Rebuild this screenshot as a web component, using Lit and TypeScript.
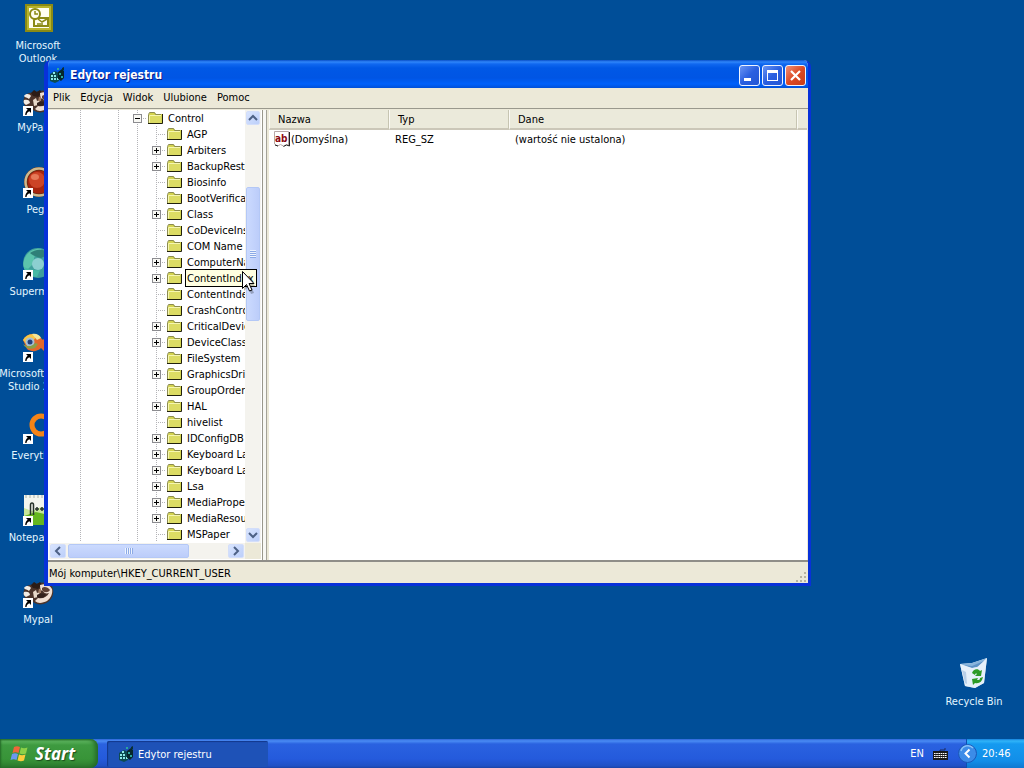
import { LitElement, html, svg, css, nothing } from "lit";
import { customElement, property } from "lit/decorators.js";
import { classMap } from "lit/directives/class-map.js";

const shortcutArrow = svg`
  <rect x="1" y="22" width="10" height="10" fill="#fff"/>
  <path d="M4 24h5v5l-1.700-1.700c-1.800 1-2.600 2-2.800 3.700h-1.300c0-2.400.9-4 2.500-5.300z" fill="#000"/>`;

const raccoon = svg`
  <path d="M3 12c3-4 7-4 9-2 4-5 12-4 17-1 3 3 3 10 0 14-4 6-13 7-18 3-4-1-6-2-8-4-2-3-2-7 0-10z" fill="#4c342a"/>
  <path d="M2 12c2-3 6-2 7 0l-2 3c-2-2-4-1-5-3zM2 16c3-1 6 0 6 3l-4 2c-2-1-3-3-2-5z" fill="#f3ece4"/>
  <path d="M9 9l3-3 3 2 3-2 2 3-4 4-5-1z" fill="#2c1c16"/>
  <path d="M11 16l3-2 1 3 3-1-2 5-4 1z" fill="#e8d8c8"/>
  <path d="M18 9c5-2 10 0 12 4 1 4-1 9-5 12-4 2-9 3-12 0l3-3c5 1 9-1 11-5-3 1-5 0-6-2-2 0-3-2-3-6z" fill="#f0dfd2"/>
  <path d="M20 12c2-2 6-1 8 2-2 3-6 3-8 0z" fill="#5e4034"/>
  <path d="M15 19c3-2 7-2 9 0-2 3-6 4-9 2z" fill="#33211b"/>
  <path d="M17 13h2v4h-3z" fill="#a07c64"/>`;

const pictures: Record<string, unknown> = {
  outlook: svg`
    <rect x="3" y="2" width="28" height="28" fill="#8b8a14"/>
    <rect x="5" y="4" width="24" height="24" fill="#b9b52c"/>
    <rect x="7" y="6" width="20" height="20" fill="#fffef0"/>
    <path d="M15 16h11v8H12v-6z" fill="#fffef0" stroke="#8b8a14" stroke-width="2"/>
    <path d="M16 17l4 3 5-3M15 22h6" fill="none" stroke="#8b8a14" stroke-width="1.500"/>
    <circle cx="13" cy="12" r="5" fill="#fffef0" stroke="#8b8a14" stroke-width="2"/>
    <path d="M13 9v3h3" fill="none" stroke="#8b8a14" stroke-width="1.500"/>`,
  raccoon,
  ball: svg`
    <circle cx="17" cy="16" r="15" fill="#5d2a14"/>
    <circle cx="17" cy="16" r="13.500" fill="none" stroke="#cdb98e" stroke-width="2.500"/>
    <circle cx="17" cy="16" r="11.500" fill="#a5240d"/>
    <circle cx="15" cy="14" r="8" fill="#cc4426"/>
    <ellipse cx="13" cy="11" rx="4" ry="3" fill="#e67a58"/>`,
  globe: svg`
    <circle cx="16" cy="15" r="15" fill="#3f9f9c"/>
    <path d="M2 12C5 3 13 0 20 1c-6 3-9 8-8 14l-8 8c-3-3-3-7-2-11z" fill="#5cc4ac"/>
    <path d="M8 5c5-4 14-5 20 1l-9 4c-5-1-9-3-11-5z" fill="#2e7f78"/>
    <circle cx="16" cy="16" r="6" fill="#8ccfd0"/>
    <path d="M2 19c5 2 10 4 16 3l-3 7C8 29 3 24 2 19z" fill="#46b9a4"/>`,
  studio: svg`
    <path d="M1 10c3-6 11-8 16-4l4 4 5-6 6 2v16l-6 3-7-7c-4 4-10 4-14 1z" fill="#e2682c"/>
    <path d="M1 10C4 4 11 3 15 6l-4 5-6 4z" fill="#f6c648"/>
    <path d="M10 4c4-1 8 1 9 4l-4 2z" fill="#f3e59a"/>
    <circle cx="8" cy="12" r="4.500" fill="#a5bfd6"/>
    <circle cx="8" cy="12" r="2.500" fill="#23407a"/>
    <path d="M1 14c2 4 7 6 12 4l3-4-3-1c-3 4-8 4-12 1z" fill="#88a04a"/>`,
  search: svg`
    <circle cx="19" cy="13" r="9" fill="none" stroke="#f58418" stroke-width="5"/>
    <path d="M25 20l6 7" stroke="#f58418" stroke-width="5"/>`,
  notepad: svg`
    <rect x="2" y="1" width="29" height="30" fill="#f3f6ee"/>
    <path d="M2 14l8 3 9-4 12 3v14H2z" fill="#c6e69a"/>
    <path d="M2 22l12-4 17 4v9H2z" fill="#65b71f"/>
    <path d="M4 1v3M8 1v3M12 1v3M16 1v3M20 1v3M24 1v3" stroke="#c4c9c0" stroke-width="1.500"/>
    <path d="M8.500 21V11q0-2 1.500-2t1.500 2v10M13 15h4M15 13v4M18 15h4M20 13v4" fill="none" stroke="#26332a" stroke-width="1.500"/>`,
  bin: svg`
    <path d="M2 6l12-1 15-5-3 25-9 5-10-2z" fill="#d7e6f4"/>
    <path d="M2 6l12-1 15-5-9 8-6 2z" fill="#88b4dc"/>
    <path d="M5 7l9 1 12-5-7 6-5 1z" fill="#5d92c6"/>
    <path d="M2 6l12 4 6-1 9-9-3 25-9 5-10-2z" fill="#e9f1fa" opacity=".85"/>
    <path d="M4 12l4 2 1 12-2-1z" fill="#b9cfe8"/>
    <path d="M14 15c1-4 6-5 8-2l2-1-1 6h-6l2-2c-1-1-2 0-2 1zM25 19c-1 5-4 7-8 6l-2 2-1-6 6-1-1 2c2 0 3 0 3-2z" fill="#2c9a26"/>`,
};

const registryGlyph = html`<svg class="reg" viewBox="0 0 16 16" aria-hidden="true">
  <path d="M1 7l5-3 4 2v8l-4 2-5-2z" fill="#0c4c50"/>
  <path d="M2 8h2v2H2zM5 8h2v2H5zM2 11h2v2H2zM5 11h2v2H5zM8 11h2v2H8zM4 5h2v2H4z" fill="#8ceae6"/>
  <path d="M9 5l4-3 2 2v7l-3 3-3-2z" fill="#06282c"/>
  <path d="M10 6h2v2h-2zM12 9h2v2h-2zM8 1h2v2H8z" fill="#2ca79c"/>
  <path d="M13 1l2-1v3h-2z" fill="#0a3034"/></svg>`;

const tahoma = css`"DejaVu Sans Condensed", "Noto Sans", sans-serif`;

@customElement("desktop-icon")
export class DesktopIcon extends LitElement {
  @property() label = "";
  @property() picture = "";
  @property({ type: Boolean }) shortcut = false;

  static styles = css`
    :host { display: block; width: 76px; height: 82px; }
    a {
      display: flex; flex-direction: column; align-items: center; gap: 5px;
      padding-top: 2px; color: #e4f6ff; text-decoration: none;
      font: 11px/13px ${tahoma}; text-align: center;
    }
    svg { width: 32px; height: 32px; flex: none; }
    span { white-space: pre; }
  `;

  render() {
    return html`<a href="#">
      <svg viewBox="0 0 32 32" aria-hidden="true">${pictures[this.picture]}${this.shortcut ? shortcutArrow : nothing}</svg>
      <span>${this.label}</span>
    </a>`;
  }
}

interface Key { name: string; open?: boolean; closed?: boolean; tip?: boolean; }

const keys: Key[] = [
  { name: "AGP" },
  { name: "Arbiters", closed: true },
  { name: "BackupRestore", closed: true },
  { name: "Biosinfo" },
  { name: "BootVerificationProgram" },
  { name: "Class", closed: true },
  { name: "CoDeviceInstallers" },
  { name: "COM Name Arbiter" },
  { name: "ComputerName", closed: true },
  { name: "ContentIndex", closed: true, tip: true },
  { name: "ContentIndexCommon" },
  { name: "CrashControl" },
  { name: "CriticalDeviceDatabase", closed: true },
  { name: "DeviceClasses", closed: true },
  { name: "FileSystem" },
  { name: "GraphicsDrivers", closed: true },
  { name: "GroupOrderList" },
  { name: "HAL", closed: true },
  { name: "hivelist" },
  { name: "IDConfigDB", closed: true },
  { name: "Keyboard Layout", closed: true },
  { name: "Keyboard Layouts", closed: true },
  { name: "Lsa", closed: true },
  { name: "MediaProperties", closed: true },
  { name: "MediaResources", closed: true },
  { name: "MSPaper" },
];

@customElement("registry-tree")
export class RegistryTree extends LitElement {
  static styles = css`
    :host { display: block; font: 11px/17px ${tahoma}; color: #000; }
    ul { list-style: none; margin: 0; padding: 0; }
    .row { display: flex; height: 16px; padding-left: 3px; overflow: hidden; position: relative; white-space: nowrap; }
    .row.hovered { overflow: visible; z-index: 2; }
    .cell { flex: none; width: 19px; display: grid; place-items: center; box-sizing: border-box; }
    .line { background: repeating-linear-gradient(#b4b4b8 0 1px, transparent 1px 2px) 9px 0 / 1px 100% no-repeat; }
    .branch {
      background:
        repeating-linear-gradient(#b4b4b8 0 1px, transparent 1px 2px) 9px 0 / 1px 100% no-repeat,
        repeating-linear-gradient(90deg, #b4b4b8 0 1px, transparent 1px 2px) 9px 8px / 10px 1px no-repeat;
    }
    button {
      width: 9px; height: 9px; padding: 0; border: 1px solid #8c8c90; background: #f8f8f4;
      display: grid; place-items: center; border-radius: 0;
    }
    button svg { width: 7px; height: 7px; display: block; }
    .folder { flex: none; width: 17px; height: 16px; }
    .label { padding-left: 4px; }
    .tip {
      position: absolute; left: 136px; top: -1px; height: 16px; padding: 0 2px 0 1px;
      background: #ffffe1; border: 1px solid #000; line-height: 17px;
    }
    .pointer { position: absolute; left: 192px; top: 0; width: 14px; height: 24px; }
  `;

  private row(key: Key) {
    const cells = key.open ? ["", "line", "", "line"] : ["", "line", "", "line", "line"];
    return html`<li class=${classMap({ row: true, hovered: !!key.tip })}>
      ${cells.map((c) => html`<span class="cell ${c}"></span>`)}
      <span class="cell branch">
        ${key.open || key.closed
          ? html`<button aria-label=${`${key.open ? "Zwiń" : "Rozwiń"} ${key.name}`}>
              <svg viewBox="0 0 7 7"><path d=${key.open ? "M1 3.5h5" : "M1 3.5h5M3.5 1v5"} stroke="#000"/></svg>
            </button>`
          : nothing}
      </span>
      <svg class="folder" viewBox="0 0 17 16" aria-hidden="true">
        <path d="M2 13.500V4l1-1.500h5L9 4h6v9.500z" fill="#d4d450"/>
        <path d="M2 6h12v7H2z" fill="#dcdc64"/>
        <path d="M1.500 13V4.500l1-2h5l1 2H14" fill="none" stroke="#8c8c50"/>
        <path d="M2.500 12.500v-7H14" fill="none" stroke="#f6f6b0"/>
        <path d="M15.500 4v9.500H1" fill="none" stroke="#20200c"/>
      </svg>
      <span class="label">${key.name}</span>
      ${key.tip
        ? html`<span class="tip" role="tooltip">${key.name}</span>
            <svg class="pointer" viewBox="0 0 14 24" aria-hidden="true">
              <path d="M3 3v18l4-4 3 7 3-1-3-7h4z" fill="#000" opacity=".25"/>
              <path d="M1.500 1.500v17l4-4 3 6.500 2.500-1-3-6.500h5z" fill="#fff" stroke="#000"/>
            </svg>`
        : nothing}
    </li>`;
  }

  render() {
    return html`<ul>${[{ name: "Control", open: true }, ...keys].map((k) => this.row(k))}</ul>`;
  }
}

@customElement("scroll-bar")
export class ScrollBar extends LitElement {
  @property({ type: Boolean, reflect: true }) horizontal = false;
  @property({ type: Number }) before = 0;
  @property({ type: Number }) size = 0;
  @property({ type: Number }) after = 0;

  static styles = css`
    :host { display: flex; flex-direction: column; background: #f4f3ee; padding: 1px; gap: 1px; box-sizing: border-box; width: 16px; }
    :host([horizontal]) { flex-direction: row; width: auto; height: 16px; }
    button {
      flex: none; width: 14px; height: 14px; padding: 0; border: 1px solid #d3defa; border-radius: 2px;
      background: linear-gradient(135deg, #d8e4fe, #bccffa); display: grid; place-items: center;
    }
    :host([horizontal]) button { width: 16px; }
    button svg { width: 10px; height: 10px; fill: none; stroke: #4d6185; stroke-width: 2; display: block; }
    .track { flex: 1; display: flex; flex-direction: inherit; min-height: 0; min-width: 0; }
    .track > div { flex-basis: 0; }
    .thumb {
      border: 1px solid #b4c8f6; border-radius: 2px; box-sizing: border-box; min-height: 0; min-width: 0;
      background: linear-gradient(90deg, #cbdafe, #bccdfa); display: grid; place-items: center;
    }
    :host([horizontal]) .thumb { background: linear-gradient(#cbdafe, #bccdfa); }
    .grip { width: 6px; height: 8px; background: repeating-linear-gradient(#eef4fe 0 1px, #8caae6 1px 2px); }
    :host([horizontal]) .grip { width: 8px; height: 6px; background: repeating-linear-gradient(90deg, #eef4fe 0 1px, #8caae6 1px 2px); }
  `;

  render() {
    const h = this.horizontal;
    return html`
      <button aria-label=${h ? "W lewo" : "W górę"}><svg viewBox="0 0 10 10"><path d=${h ? "M7 1L3 5l4 4" : "M1 7l4-4 4 4"}/></svg></button>
      <div class="track">
        <div style="flex-grow:${this.before}"></div>
        <div class="thumb" style="flex-grow:${this.size}"><span class="grip"></span></div>
        <div style="flex-grow:${this.after}"></div>
      </div>
      <button aria-label=${h ? "W prawo" : "W dół"}><svg viewBox="0 0 10 10"><path d=${h ? "M3 1l4 4-4 4" : "M1 3l4 4 4-4"}/></svg></button>`;
  }
}

@customElement("registry-window")
export class RegistryWindow extends LitElement {
  static styles = css`
    :host {
      display: flex; flex-direction: column; box-sizing: border-box; overflow: hidden;
      border: solid #0831d9; border-width: 0 3px 3px 4px; border-radius: 7px 7px 0 0;
      background: #ece9d8; font: 11px/13px ${tahoma}; color: #000;
    }
    button { font: inherit; color: inherit; border: 0; background: none; padding: 0; }
    header {
      height: 28px; flex: none; display: flex; align-items: center; gap: 5px; padding: 2px 2px 0 1px; box-sizing: border-box;
      background: linear-gradient(#0a50c8 0, #2f86fa 2px, #1068f0 4px, #0058e6 8px, #0055e4 18px, #0061fb 24px, #0050d8 28px);
    }
    .reg { width: 16px; height: 16px; }
    h1 { flex: 1; margin: 0; font: bold 12px/16px ${tahoma}; color: #fff; text-shadow: 1px 1px #0a1883; }
    .controls { display: flex; gap: 2px; }
    .controls button {
      width: 21px; height: 21px; border: 1px solid #f0f4ff; border-radius: 3px; box-sizing: border-box;
      background: linear-gradient(135deg, #6a94f4, #2a5fe0 50%, #2456d4);
    }
    .controls .close { background: linear-gradient(135deg, #f09078, #dc4a24 50%, #c83c18); }
    .controls svg { display: block; width: 19px; height: 19px; }
    nav { flex: none; height: 20px; display: flex; align-items: center; gap: 10px; padding: 0 0 1px 5px; box-sizing: border-box; }
    main { flex: 1; min-height: 0; display: grid; grid-template-columns: 215px 1fr; column-gap: 6px; padding: 1px 1px 0 0; border-top: 1px solid #9a988c; border-bottom: 2px solid #8f8e88; }
    .tree-pane {
      display: grid; grid-template-columns: minmax(0, 1fr) 16px; grid-template-rows: minmax(0, 1fr) 16px;
      background: #fff; border-right: 1px solid #9a988c; padding: 0 1px 1px 1px; box-shadow: 3px 0 #f8f8f4, 4px 0 #a4a298;
    }
    .corner { background: #ece9d8; }
    .list { background: #fff; min-width: 0; }
    table { width: 100%; border-collapse: separate; border-spacing: 0; table-layout: fixed; }
    th, td { text-align: left; font-weight: normal; padding: 0; white-space: nowrap; }
    th {
      height: 20px; box-sizing: border-box; padding: 1px 0 0 8px; background: #ebeadb;
      border-bottom: 2px solid #cbc7b8; border-right: 1px solid #c7c5b2; border-left: 1px solid #fbfaf4;
    }
    th:last-child { border-right: 0; }
    td { height: 18px; padding-left: 6px; }
    td.name { padding-left: 5px; }
    .c1 { width: 120px; }
    .c3 { width: 288px; }
    .value { display: flex; align-items: center; gap: 1px; }
    .value svg { width: 16px; height: 16px; flex: none; }
    .value text { font: bold 10px "DejaVu Sans Condensed", sans-serif; }
    footer { flex: none; height: 21px; display: flex; align-items: center; justify-content: space-between; padding: 2px 0 0 1px; box-sizing: border-box; }
    footer svg { width: 12px; height: 12px; align-self: flex-end; }
  `;

  render() {
    return html`
      <header>
        ${registryGlyph}
        <h1>Edytor rejestru</h1>
        <div class="controls">
          <button aria-label="Minimalizuj"><svg viewBox="0 0 19 19"><path d="M4 12h7v3H4z" fill="#fff"/></svg></button>
          <button aria-label="Maksymalizuj"><svg viewBox="0 0 19 19"><path d="M4 4h11v11H4zM5 7v7h9V7z" fill="#fff" fill-rule="evenodd"/></svg></button>
          <button class="close" aria-label="Zamknij"><svg viewBox="0 0 19 19"><path d="M5 5l9 9M14 5l-9 9" stroke="#fff" stroke-width="2.200"/></svg></button>
        </div>
      </header>
      <nav aria-label="Menu">
        ${["Plik", "Edycja", "Widok", "Ulubione", "Pomoc"].map((m) => html`<button>${m}</button>`)}
      </nav>
      <main>
        <section class="tree-pane" aria-label="Klucze">
          <registry-tree></registry-tree>
          <scroll-bar .before=${61} .size=${132} .after=${207}></scroll-bar>
          <scroll-bar horizontal .before=${1} .size=${120} .after=${38}></scroll-bar>
          <div class="corner"></div>
        </section>
        <section class="list" aria-label="Wartości">
          <table>
            <colgroup><col class="c1"><col class="c1"><col class="c3"><col></colgroup>
            <thead><tr><th>Nazwa</th><th>Typ</th><th>Dane</th><th aria-hidden="true"></th></tr></thead>
            <tbody><tr>
              <td class="name"><span class="value">
                <svg viewBox="0 0 16 16" aria-hidden="true">
                  <path d="M.5.5h14v14l-2-1-3 1.500-3-1.500-3 1.500-3-2z" fill="#fff" stroke="#b8a8a8"/>
                  <path d="M15.500 1v14l-3-1-3 1.500M1 14l3 1" fill="none" stroke="#222"/>
                  <text x="1" y="11" fill="#8c0a12">ab</text>
                </svg>(Domyślna)</span></td>
              <td>REG_SZ</td>
              <td>(wartość nie ustalona)</td>
              <td></td>
            </tr></tbody>
          </table>
        </section>
      </main>
      <footer>
        <span>Mój komputer\\HKEY_CURRENT_USER</span>
        <svg viewBox="0 0 12 12" aria-hidden="true"><path d="M8 1h2v2H8zM4 5h2v2H4zM8 5h2v2H8zM0 9h2v2H0zM4 9h2v2H4zM8 9h2v2H8z" fill="#b8b4a0"/></svg>
      </footer>`;
  }
}

@customElement("app-root")
export class AppRoot extends LitElement {
  static styles = css`
    :host {
      display: flex; flex-direction: column; height: 100vh; overflow: hidden;
      background: #004e98; font: 11px/13px ${tahoma}; color: #fff;
    }
    .desktop { flex: 1; position: relative; min-height: 0; display: flex; justify-content: space-between; }
    .column { display: flex; flex-direction: column; }
    .column.end { justify-content: flex-end; padding: 0 12px 1px 0; }
    registry-window { position: absolute; inset: 60px 213px 153px 44px; }
    .taskbar {
      flex: none; height: 29px; display: flex; align-items: stretch;
      background: linear-gradient(#2c64d8 0, #4a8cf4 2px, #2a62e0 5px, #245adc 20px, #2050c4 27px, #1a42a4 29px);
    }
    button { font: inherit; color: #fff; border: 0; padding: 0; background: none; }
    .start {
      width: 98px; display: flex; align-items: center; gap: 5px; padding-left: 10px; border-radius: 0 8px 8px 0; box-sizing: border-box;
      background: linear-gradient(#2e7e30 0, #5fb860 2px, #3e9a40 6px, #389438 20px, #2c7a2e 29px);
      box-shadow: inset -3px 0 4px #256a28, inset 1px 0 2px #256a28;
      font: italic bold 17px/24px "Noto Sans", sans-serif; text-shadow: 1px 1px 1px #1c4c1c;
    }
    .start svg { width: 20px; height: 20px; }
    .task {
      width: 161px; margin: 2px auto 1px 9px; display: flex; align-items: center; gap: 4px; padding-left: 11px;
      border-radius: 2px; background: #1e52b7; box-shadow: inset 1px 1px 1px #12388c; text-align: left; box-sizing: border-box;
    }
    .reg { width: 16px; height: 16px; }
    .lang { display: flex; align-items: center; gap: 9px; padding-right: 18px; }
    .lang svg { width: 15px; height: 12px; }
    .tray {
      position: relative; width: 58px; display: flex; align-items: center; padding-left: 15px; box-sizing: border-box;
      background: linear-gradient(#1580dc 0, #30b4f8 2px, #159af0 5px, #128ee8 22px, #1078d0 29px);
      border-left: 1px solid #0c50b0;
    }
    .more { position: absolute; left: -9px; top: 5px; width: 19px; height: 19px; }
    .more svg { display: block; width: 19px; height: 19px; }
  `;

  render() {
    return html`
      <div class="desktop">
        <div class="column">
          <desktop-icon picture="outlook" .label=${"Microsoft\nOutlook"}></desktop-icon>
          <desktop-icon picture="raccoon" shortcut label="MyPal68"></desktop-icon>
          <desktop-icon picture="ball" shortcut label="Pegs"></desktop-icon>
          <desktop-icon picture="globe" shortcut label="Supermium"></desktop-icon>
          <desktop-icon picture="studio" shortcut .label=${"Microsoft Visual\nStudio 2005"}></desktop-icon>
          <desktop-icon picture="search" shortcut label="Everything"></desktop-icon>
          <desktop-icon picture="notepad" shortcut label="Notepad++"></desktop-icon>
          <desktop-icon picture="raccoon" shortcut label="Mypal"></desktop-icon>
        </div>
        <div class="column end">
          <desktop-icon picture="bin" label="Recycle Bin"></desktop-icon>
        </div>
        <registry-window></registry-window>
      </div>
      <div class="taskbar">
        <button class="start">
          <svg viewBox="0 0 20 20" aria-hidden="true">
            <path d="M4 3c2-1 4-1 6 0L8.500 9c-2-1-4-1-6 0z" fill="#f0663a"/>
            <path d="M11 3.500c2 1 4 1 6.500 0L16 9.500c-2 1-4 1-6.500 0z" fill="#8cd048"/>
            <path d="M2 10c2-1 4-1 6 0l-1.500 6c-2-1-4-1-6 0z" fill="#6c98f0"/>
            <path d="M9 10.500c2 1 4 1 6.500 0l-1.500 6c-2 1-4 1-6.500 0z" fill="#fccc3c"/>
          </svg>Start</button>
        <button class="task">${registryGlyph}Edytor rejestru</button>
        <div class="lang">
          <span>EN</span>
          <svg viewBox="0 0 15 12" aria-hidden="true">
            <path d="M7 4V2h5V0" fill="none" stroke="#1c2c60"/>
            <rect y="3" width="15" height="9" fill="#1a1a1a"/>
            <path d="M1 5.500h13M1 7.500h13M1 9.500h13" stroke="#fff" stroke-width="1.200" stroke-dasharray="1.600 .6"/>
          </svg>
        </div>
        <div class="tray">
          <button class="more" aria-label="Pokaż ukryte ikony">
            <svg viewBox="0 0 19 19"><circle cx="9.500" cy="9.500" r="9" fill="#3c8ce8" stroke="#1c58b8"/>
              <path d="M3 7a7 7 0 0 1 12-3" fill="none" stroke="#8cc4f8" stroke-width="1.500"/>
              <path d="M11.500 5.500l-4 4 4 4" fill="none" stroke="#fff" stroke-width="2"/></svg>
          </button>
          <time>20:46</time>
        </div>
      </div>`;
  }
}
